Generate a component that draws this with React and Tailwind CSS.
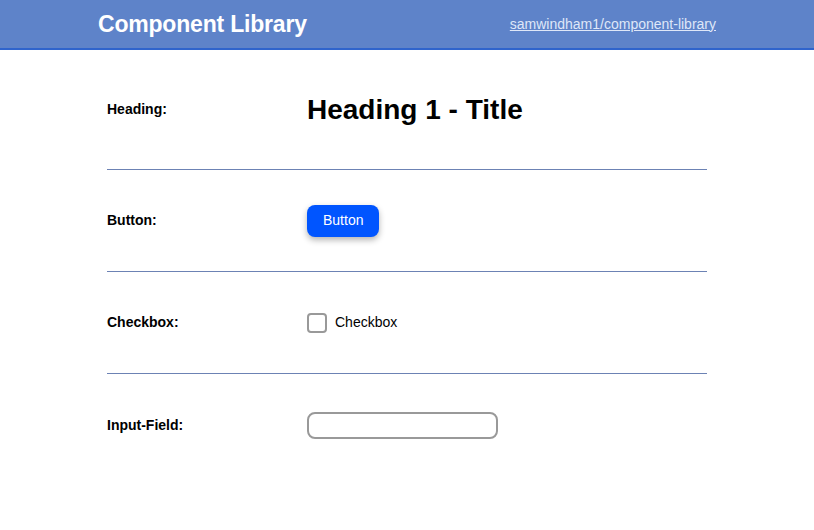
import React from 'react';

function Row({ label, children, height = 'h-[102px]', last = false }) {
  return (
    <div className={`flex items-center ${height} ${last ? '' : 'border-b border-[#6c82b4]'}`}>
      <div className="w-[200px] text-[14px] font-bold text-black">{label}</div>
      <div className="flex items-center">{children}</div>
    </div>
  );
}

export default function App() {
  return (
    <div className="min-h-[530px] bg-white font-['Liberation_Sans',Arial,sans-serif] text-black">
      <header className="flex h-[50px] items-center justify-between border-b-2 border-[#2f64cc] bg-[#5e83c9] px-[98px]">
        <h1 className="text-[23px] font-bold tracking-[-0.2px] text-white">Component Library</h1>
        <a href="#" className="text-[14px] text-[#dfe7f8] underline">
          samwindham1/component-library
        </a>
      </header>

      <main className="mx-auto w-[600px]">
        <Row label="Heading:" height="h-[120px]">
          <h2 className="text-[28px] font-bold">Heading 1 - Title</h2>
        </Row>

        <Row label="Button:">
          <button className="h-[32px] rounded-lg bg-[#0055ff] px-4 text-[14px] text-white shadow-[0_3px_6px_rgba(0,0,0,0.3)]">
            Button
          </button>
        </Row>

        <Row label="Checkbox:">
          <label className="flex items-center gap-2 text-[14px]">
            <span className="h-5 w-5 rounded-[4px] border-2 border-[#999]" />
            Checkbox
          </label>
        </Row>

        <Row label="Input-Field:" last>
          <input
            type="text"
            className="h-[27px] w-[191px] rounded-lg border-2 border-[#999] px-2 text-[14px] outline-none"
          />
        </Row>
      </main>
    </div>
  );
}
